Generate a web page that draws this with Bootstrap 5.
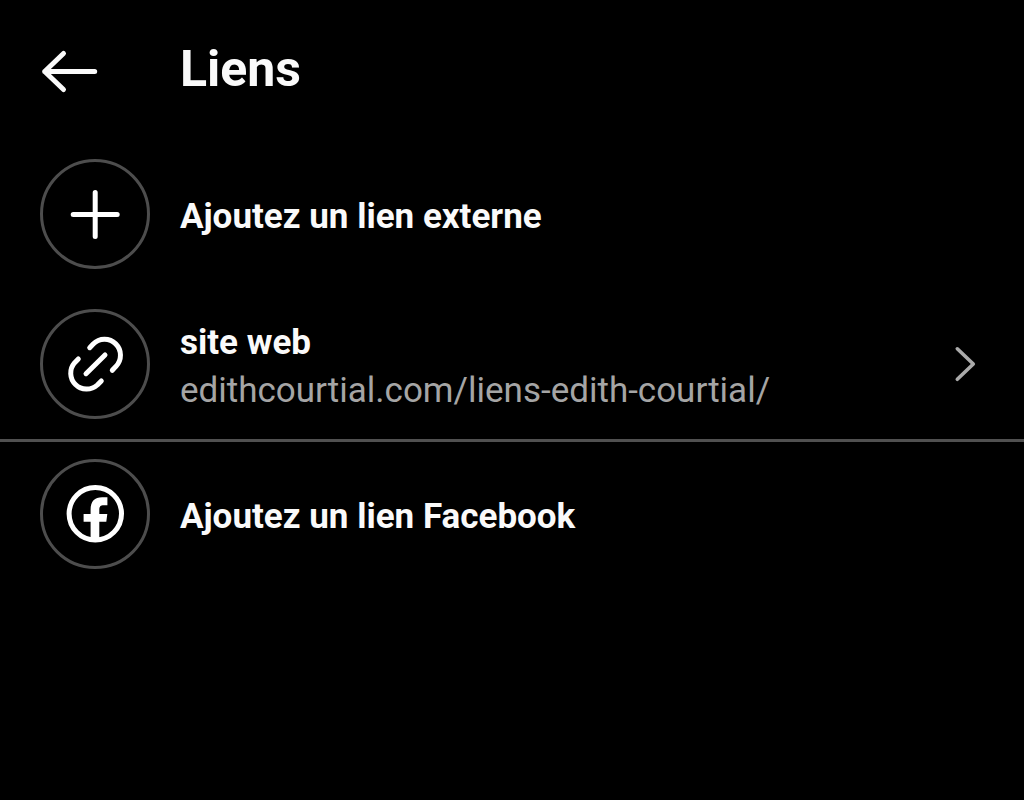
<!DOCTYPE html>
<html lang="fr">
<head>
<meta charset="utf-8">
<meta name="viewport" content="width=device-width, initial-scale=1">
<title>Liens</title>
<link href="https://cdn.jsdelivr.net/npm/bootstrap@5.3.0/dist/css/bootstrap.min.css" rel="stylesheet">
<style>
body { background: #000; color: #fafafa; font-family: Roboto, "Liberation Sans", sans-serif; }
.topbar { padding: 40px 40px 39px; gap: 80px; }
.back-btn { width: 60px; height: 60px; }
.screen-title { font-size: 50px; line-height: 58px; font-weight: 700; }
.link-row { padding: 20px 40px; gap: 30px; color: inherit; font-size: 35px; line-height: 48px; }
.link-row:hover { color: inherit; }
.row-text { padding-top: 5px; min-width: 0; }
.row-title { font-weight: 700; }
.row-url { color: #a5a5a5; overflow-wrap: anywhere; }
.ring { width: 110px; height: 110px; border: 3px solid #4d4d4d; }
.divider { box-shadow: 0 3px 0 #505050; }
</style>
</head>
<body>
<header class="topbar d-flex align-items-start">
  <button type="button" class="back-btn btn p-0 border-0 flex-shrink-0 d-flex" aria-label="Retour">
    <svg width="60" height="60" viewBox="0 0 60 60" fill="none" stroke="#fafafa" stroke-width="5" stroke-linecap="round" stroke-linejoin="round"><path d="M54.700 31.500H4.700M23.500 13.500L4.700 31.500l18.800 18"/></svg>
  </button>
  <h1 class="screen-title m-0">Liens</h1>
</header>
<main>
  <a href="#externe" class="link-row d-flex align-items-center text-decoration-none">
    <span class="ring rounded-circle d-flex align-items-center justify-content-center flex-shrink-0">
      <svg width="60" height="60" viewBox="0 0 60 60" fill="none" stroke="#fff" stroke-width="5" stroke-linecap="round"><path d="M30.200 8.500v44M8.200 30.500h44"/></svg>
    </span>
    <span class="row-text row-title">Ajoutez un lien externe</span>
  </a>
  <a href="#site" class="link-row divider d-flex align-items-center text-decoration-none">
    <span class="ring rounded-circle d-flex align-items-center justify-content-center flex-shrink-0">
      <svg width="60" height="60" viewBox="0 0 60 60" fill="none" stroke="#fff" stroke-width="5" stroke-linecap="round" stroke-linejoin="round"><path d="M24.700 13.700l3.500-3.600A15.900 15.900 0 0 1 50.900 32.400l-3.600 3.900M21 39.700L40 21M13.300 25l-3.600 3.700A15.900 15.900 0 0 0 32.300 51l4-4"/></svg>
    </span>
    <span class="row-text d-flex flex-column flex-grow-1"><span class="row-title">site web</span><span class="row-url">edithcourtial.com/liens-edith-courtial/</span></span>
    <svg class="flex-shrink-0" width="36" height="36" viewBox="0 0 36 36" fill="none" stroke="#aaa" stroke-width="3.600" stroke-linecap="round" stroke-linejoin="round" aria-hidden="true"><path d="M9.300 2.800L25.300 18 9.300 33.300"/></svg>
  </a>
  <a href="#facebook" class="link-row d-flex align-items-center text-decoration-none">
    <span class="ring rounded-circle d-flex align-items-center justify-content-center flex-shrink-0">
      <svg width="60" height="60" viewBox="0 0 60 60"><circle cx="30.300" cy="29.800" r="26.200" fill="none" stroke="#fff" stroke-width="5"/><path fill="#fff" d="M25.600 55V37.700h-7V30h7v-4.500c0-8 4-12.200 11.600-12.200h5.200v8h-3.600c-3.400 0-4.500 1.400-4.500 4.500V30h8l-1 7.700h-7V55z"/></svg>
    </span>
    <span class="row-text row-title">Ajoutez un lien Facebook</span>
  </a>
</main>
<script src="https://cdn.jsdelivr.net/npm/bootstrap@5.3.0/dist/js/bootstrap.bundle.min.js"></script>
</body>
</html>
